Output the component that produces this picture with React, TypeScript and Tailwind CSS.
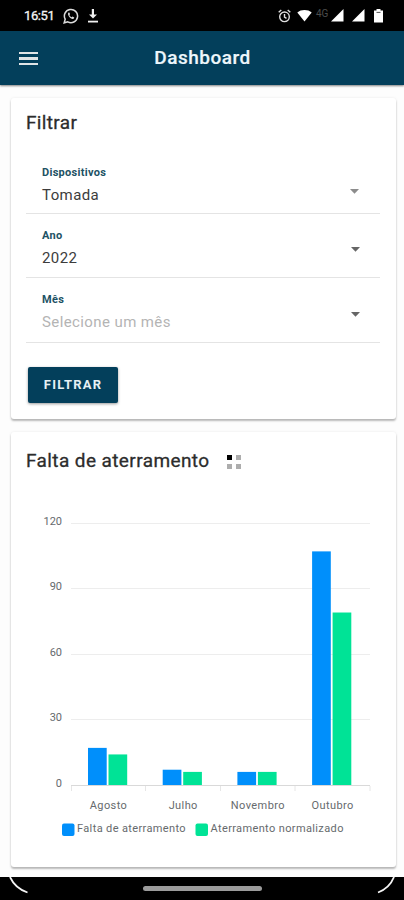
import { ReactNode } from "react";

type SelectFieldProps = {
  label: string;
  value: string;
  placeholder?: boolean;
  offset?: string;
  arrow?: string;
};

const StatusBar = () => (
  <div className="flex h-[31px] items-center justify-between bg-black pl-6 pr-[21px] text-white">
    <div className="flex items-center">
      <span className="w-[39px] text-[13px] leading-4 tracking-[-0.4px] text-[#f4f4f4] [-webkit-text-stroke:0.3px]">
        16:51
      </span>
      <svg width="16" height="16" viewBox="0 0 16 16" fill="none" stroke="#dcdcdc" strokeWidth="1.5">
        <path d="M1.2 14.8l1-3.6A6.6 6.6 0 1 1 4.8 13.8z" />
        <path
          d="M5.6 4.6c-1 .8-.7 2.4.4 3.9 1.2 1.7 3.2 3 4.6 2.3l.7-1.3-1.8-1-.9.8c-1-.4-1.8-1.3-2.2-2.3l.7-.8-.8-1.7z"
          fill="#dcdcdc"
          stroke="none"
        />
      </svg>
      <svg className="ml-2" width="12" height="14" viewBox="0 0 12 14" fill="#f0f0f0">
        <path d="M4.8 0h2.200v5.500h3L6 9.600 2 5.500h2.800z" />
        <path d="M1 11.700h10v1.800H1z" />
      </svg>
    </div>
    <div className="flex items-center">
      <svg width="13" height="14" viewBox="0 0 13 14" fill="none" stroke="#e0e0e0" strokeWidth="1.4">
        <circle cx="6.5" cy="7.8" r="4.8" />
        <path d="M.7 3.300L3.300 1M12.300 3.300L9.700 1M6.500 5v3.200l2 1.200" />
      </svg>
      <svg className="ml-[6px]" width="15" height="13" viewBox="0 0 15 13" fill="#fff">
        <path d="M.3 3.500C4 .2 11 .2 14.700 3.500L7.500 12.500z" />
      </svg>
      <span className="ml-1 mb-[4px] w-[14px] text-[10px] leading-3 text-[#4c4c4c]">4G</span>
      <svg className="ml-[1px]" width="13" height="13" viewBox="0 0 13 13" fill="#fff">
        <path d="M0 12.500L12.500 0v12.500z" />
      </svg>
      <svg className="ml-2" width="13" height="13" viewBox="0 0 13 13" fill="#fff">
        <path d="M0 12.500L12.500 0v12.500z" />
      </svg>
      <svg className="ml-[9px]" width="9" height="14" viewBox="0 0 9 14" fill="#fff">
        <path d="M2.500 0h4v1.500H9V13.500H0V1.500h2.500z" />
        <path d="M2.500 3.400h4" stroke="#555" />
      </svg>
    </div>
  </div>
);

const Header = () => (
  <header className="relative z-10 flex h-[54px] items-center bg-[#033f5b] px-[19px] shadow-[0_1px_2px_rgba(0,0,0,0.5)]">
    <div className="grid w-[19px] gap-[3px] pt-px">
      <span className="h-[2.5px] bg-[#dfe4e6]" />
      <span className="h-[2.5px] bg-[#dfe4e6]" />
      <span className="h-[2.5px] bg-[#dfe4e6]" />
    </div>
    <h1 className="mr-[18px] flex-1 pb-px text-center text-[19px] font-medium leading-6 tracking-[0.5px] text-[#eef7fc] [-webkit-text-stroke:0.2px]">
      Dashboard
    </h1>
  </header>
);

const Card = ({ children }: { children: ReactNode }) => (
  <section className="rounded-[3px] bg-white px-[15px] shadow-[0_2px_2px_rgba(0,0,0,0.26),0_0_3px_rgba(0,0,0,0.08)]">
    {children}
  </section>
);

const SelectField = ({
  label,
  value,
  placeholder,
  offset = "pt-[7px]",
  arrow = "mt-[9px] mr-5",
}: SelectFieldProps) => (
  <div className="flex h-[64.5px] items-center justify-between border-b border-[#e4e4e4] pl-4">
    <div className={offset}>
      <div className="text-[11px] font-bold leading-[18px] tracking-[0.3px] text-[#1d5264]">{label}</div>
      <div
        className={`text-[15px] leading-[26px] tracking-[0.4px] ${placeholder ? "text-[#b4b4b4]" : "text-[#3c3c3c]"}`}
      >
        {value}
      </div>
    </div>
    <svg className={arrow} width="9" height="5" viewBox="0 0 9 5" fill="#666">
      <path d="M0 0h9L4.500 4.800z" />
    </svg>
  </div>
);

const months = [
  { name: "Agosto", falta: 17, normalizado: 14 },
  { name: "Julho", falta: 7, normalizado: 6 },
  { name: "Novembro", falta: 6, normalizado: 6 },
  { name: "Outubro", falta: 107, normalizado: 79 },
];

const scale = 262 / 120;
const baseline = 285;

const BarChart = () => (
  <svg width="355" height="345" viewBox="0 0 355 345" className="block text-[11px]" fill="#666a6d">
    {[120, 90, 60, 30, 0].map((tick) => {
      const y = Math.floor(baseline - tick * scale) + 0.5;
      return (
        <g key={tick}>
          <line x1="45" x2="344" y1={y} y2={y} stroke={tick === 0 ? "#d9d9d9" : "#ededed"} />
          <text x="36" y={y + 1.5} textAnchor="end">
            {tick}
          </text>
        </g>
      );
    })}
    {[45.5, 119.5, 194.5, 269, 344].map((x) => (
      <line key={x} x1={x} x2={x} y1={baseline + 1} y2={baseline + 6} stroke="#e6e6e6" />
    ))}
    {months.map((m, i) => {
      const x = 62 + i * 74.7;
      return (
        <g key={m.name}>
          <rect x={x} y={baseline - m.falta * scale} width="18.7" height={m.falta * scale} fill="#008ffb" />
          <rect
            x={x + 20.5}
            y={baseline - m.normalizado * scale}
            width="18.7"
            height={m.normalizado * scale}
            fill="#00e396"
          />
          <text x={x + 20.5} y="309" textAnchor="middle" letterSpacing="0.4">
            {m.name}
          </text>
        </g>
      );
    })}
    <rect x="36" y="323.5" width="12.5" height="12.5" rx="2" fill="#008ffb" />
    <text x="51" y="332" letterSpacing="0.37">
      Falta de aterramento
    </text>
    <rect x="169.5" y="323.5" width="12.5" height="12.5" rx="2" fill="#00e396" />
    <text x="184.5" y="332" letterSpacing="0.37">
      Aterramento normalizado
    </text>
  </svg>
);

const BottomBar = () => (
  <div className="relative flex h-[23px] items-center justify-center bg-black">
    <div className="h-[5px] w-[119px] rounded-full bg-[#9b9b9b]" />
    <svg className="absolute inset-0" width="404" height="23" fill="none" stroke="#f4f4f4" strokeWidth="1.8">
      <path d="M10 0C13 6.500 19 12.500 27.500 15.500M394 0C391 7.500 386 12.500 378 15.500" />
    </svg>
  </div>
);

export default function App() {
  return (
    <div className="flex h-[900px] w-[404px] flex-col overflow-hidden bg-[#fdfdfd] font-[Roboto,sans-serif]">
      <StatusBar />
      <Header />
      <main className="flex flex-1 flex-col gap-[13px] pl-[11px] pr-2 pt-[13px]">
        <Card>
          <div className="h-[321px]">
            <h2 className="pt-[13px] text-[19px] leading-6 tracking-[0.35px] text-[#2c2c2c] [-webkit-text-stroke:0.3px]">
              Filtrar
            </h2>
            <div className="mt-[14px] w-[354px]">
              <SelectField label="Dispositivos" value="Tomada" offset="pt-[10px]" arrow="mt-[22px] mr-[21px] opacity-75" />
              <SelectField label="Ano" value="2022" />
              <SelectField label="Mês" value="Selecione um mês" placeholder />
            </div>
            <button className="ml-[2px] mt-[24px] h-[36px] w-[90px] rounded-[2px] bg-[#033f5b] text-[13px] font-bold tracking-[1.2px] text-[#e6f0f4] shadow-[0_1px_3px_rgba(0,0,0,0.4)]">
              FILTRAR
            </button>
          </div>
        </Card>
        <Card>
          <div className="h-[435px]">
            <div className="flex items-center pt-[17px]">
              <h2 className="w-[201px] whitespace-nowrap text-[19px] leading-6 tracking-[0.4px] text-[#2c2c2c] [-webkit-text-stroke:0.3px]">
                Falta de aterramento
              </h2>
              <div className="mt-[2px] grid grid-cols-2 gap-[4px]">
                <span className="size-[5px] bg-black" />
                <span className="size-[5px] bg-[#adadad]" />
                <span className="size-[5px] bg-[#adadad]" />
                <span className="size-[5px] bg-[#adadad]" />
              </div>
            </div>
            <div className="mt-[27px]">
              <BarChart />
            </div>
          </div>
        </Card>
      </main>
      <BottomBar />
    </div>
  );
}
